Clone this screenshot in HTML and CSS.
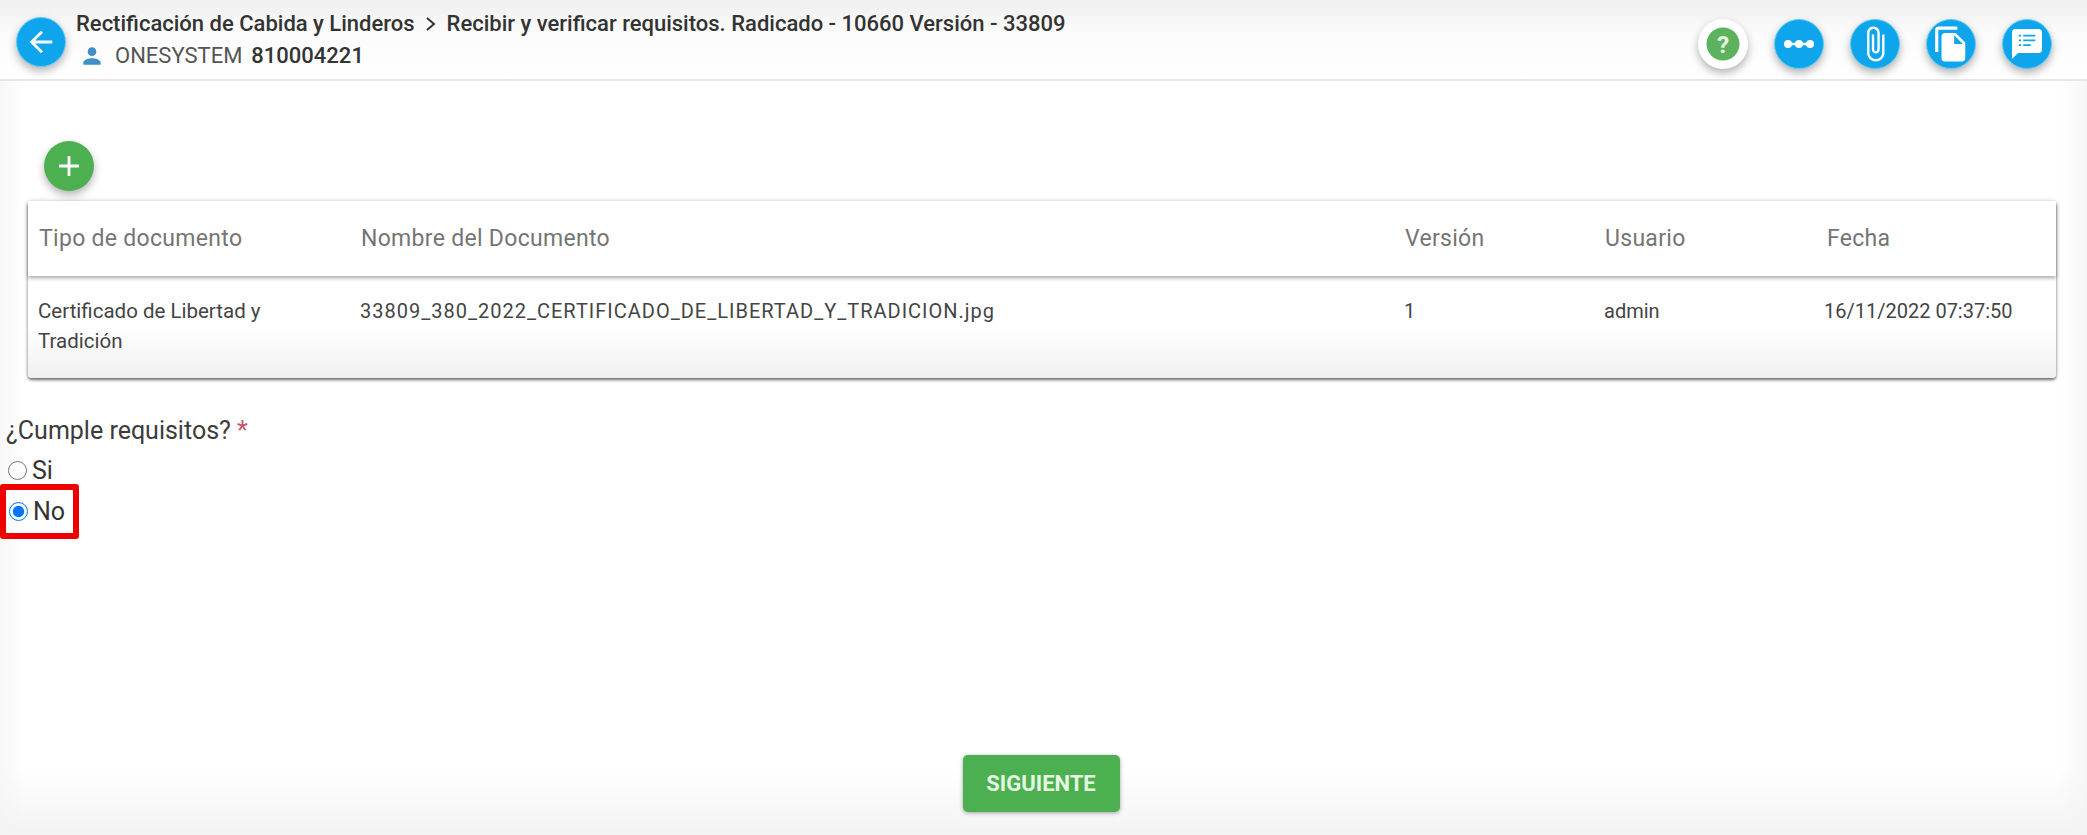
FILE: index.html
```html
<!DOCTYPE html>
<html lang="es">
<head>
    <meta charset="UTF-8">
    <title>Recibir y verificar requisitos</title>
    <link rel="stylesheet" href="styles.css">
</head>
<body>
    <div class="page">
        <header class="top-bar">
            <button class="fab fab-blue back-btn">
                <svg width="34" height="34" viewBox="0 0 24 24"><path fill="#fff" d="M20 11H7.83l5.59-5.59L12 4l-8 8 8 8 1.41-1.41L7.83 13H20v-2z"/></svg>
            </button>
            <div class="top-text">
                <div class="crumb">
                    <span>Rectificación de Cabida y Linderos</span>
                    <svg class="crumb-sep" width="14" height="16" viewBox="0 0 14 16"><path fill="none" stroke="#333" stroke-width="2" d="M3 2l7 6-7 6"/></svg>
                    <span>Recibir y verificar requisitos. Radicado - 10660 Versión - 33809</span>
                </div>
                <div class="user-line">
                    <svg class="user-icon" width="26" height="26" viewBox="0 0 24 24"><path fill="#3f8fc9" d="M12 12c2.21 0 4-1.79 4-4s-1.79-4-4-4-4 1.79-4 4 1.79 4 4 4zm0 2c-2.67 0-8 1.34-8 4v2h16v-2c0-2.66-5.33-4-8-4z"/></svg>
                    <span class="user-name">ONESYSTEM</span>
                    <strong>810004221</strong>
                </div>
            </div>
            <div class="top-actions">
                <button class="fab fab-white">
                    <svg width="34" height="34" viewBox="0 0 36 36"><circle cx="18" cy="18" r="17.5" fill="#5cb25d"/><text x="18" y="27" class="help-mark">?</text></svg>
                </button>
                <button class="fab fab-blue">
                    <svg width="34" height="12" viewBox="0 0 34 12"><path stroke="#fff" stroke-width="2.5" d="M4 6h26"/><circle cx="6" cy="6" r="4" fill="#fff"/><circle cx="17" cy="6" r="4" fill="#fff"/><circle cx="28" cy="6" r="4" fill="#fff"/></svg>
                </button>
                <button class="fab fab-blue">
                    <svg width="38" height="38" viewBox="0 0 24 24"><path fill="#fff" d="M16.5 6v11.5c0 2.21-1.79 4-4 4s-4-1.79-4-4V5c0-1.38 1.12-2.5 2.5-2.5s2.5 1.12 2.5 2.5v10.5c0 .55-.45 1-1 1s-1-.45-1-1V6H10v9.5c0 1.38 1.12 2.5 2.5 2.5s2.5-1.12 2.5-2.5V5c0-2.21-1.79-4-4-4S7 2.79 7 5v12.5c0 3.04 2.46 5.5 5.5 5.5s5.5-2.46 5.5-5.5V6h-1.5z"/></svg>
                </button>
                <button class="fab fab-blue">
                    <svg width="38" height="38" viewBox="0 0 24 24"><path fill="#fff" d="M16 1H4c-1.1 0-2 .9-2 2v14h2V3h12V1zm-1 4l6 6v10c0 1.1-.9 2-2 2H7.99C6.89 23 6 22.1 6 21l.01-14c0-1.1.89-2 1.99-2h7zm-1 7h5.5L14 6.5V12z"/></svg>
                </button>
                <button class="fab fab-blue">
                    <svg width="36" height="36" viewBox="0 0 24 24"><path fill="#fff" fill-rule="evenodd" d="M20 2H4c-1.1 0-2 .9-2 2v18l4-4h14c1.1 0 2-.9 2-2V4c0-1.1-.9-2-2-2zM8 7H6.5V5.8H8V7zm0 3.2H6.5V9H8v1.2zm0 3.2H6.5v-1.2H8v1.2zM17.5 7H9.5V5.8h8V7zm0 3.2h-8V9h8v1.2zm-3 3.2h-5v-1.2h5v1.2z"/></svg>
                </button>
            </div>
        </header>

        <main class="content">
            <button class="fab fab-green add-btn">
                <svg width="34" height="34" viewBox="0 0 24 24"><path fill="#fff" d="M19 13h-6v6h-2v-6H5v-2h6V5h2v6h6v2z"/></svg>
            </button>

            <div class="doc-card">
                <table class="doc-table">
                    <thead>
                        <tr>
                            <th class="col-type">Tipo de documento</th>
                            <th class="col-name">Nombre del Documento</th>
                            <th class="col-version">Versión</th>
                            <th class="col-user">Usuario</th>
                            <th>Fecha</th>
                        </tr>
                    </thead>
                    <tbody>
                        <tr>
                            <td class="type-cell">Certificado de Libertad y Tradición</td>
                            <td class="file-cell">33809_380_2022_CERTIFICADO_DE_LIBERTAD_Y_TRADICION.jpg</td>
                            <td>1</td>
                            <td>admin</td>
                            <td class="date-cell">16/11/2022 07:37:50</td>
                        </tr>
                    </tbody>
                </table>
            </div>

            <form class="question">
                <div class="question-label">¿Cumple requisitos? <span class="required">*</span></div>
                <label class="radio-row"><input type="radio" name="cumple"> Si</label>
                <label class="radio-row radio-marked"><input type="radio" name="cumple" checked> No</label>
            </form>
        </main>

        <div class="actions">
            <button class="next-btn">SIGUIENTE</button>
        </div>
    </div>
</body>
</html>
```

FILE: styles.css
```css
* {
    box-sizing: border-box;
}
html, body {
    height: 100%;
}
body {
    margin: 0;
    font-family: Roboto, "Liberation Sans", sans-serif;
    color: #333;
    background-color: #fff;
    overflow: hidden;
}
.page {
    height: 835px;
    display: flex;
    flex-direction: column;
    background:
        linear-gradient(to bottom, rgba(240, 240, 240, 0) 92%, #f3f3f3 100%),
        linear-gradient(to right, #f7f7f7 0, #fff 24px, #fff 2060px, #f6f6f6 100%);
}
button {
    font-family: inherit;
    border: none;
    padding: 0;
    cursor: pointer;
}

/* barra de arriba */
.top-bar {
    height: 81px;
    flex: none;
    display: flex;
    align-items: center;
    padding: 8px 35px 0 16px;
    border-bottom: 2px solid #e6e6e6;
    background: linear-gradient(to bottom, #efefef 0, #fbfbfb 40%, #fff 100%);
}
.back-btn {
    margin-top: -4px;
}
.fab {
    width: 50px;
    height: 50px;
    border-radius: 50%;
    display: flex;
    align-items: center;
    justify-content: center;
    flex: none;
    box-shadow: 0 4px 8px rgba(0, 0, 0, 0.3);
}
.fab-blue {
    background-color: #0ea5ec;
    border: 1px solid #62ccf8;
}
.fab-white {
    background-color: #fff;
}
.fab-green {
    background-color: #4caf50;
}
.help-mark {
    font-size: 26px;
    font-weight: 700;
    text-anchor: middle;
    fill: #e4f3e4;
}
.top-text {
    margin-left: 10px;
    margin-top: -11px;
}
.crumb {
    display: flex;
    align-items: center;
    font-size: 22px;
    font-weight: 500;
    line-height: 34px;
    color: #333;
}
.crumb-sep {
    margin: 0 9px 0 9px;
}
.user-line {
    display: flex;
    align-items: center;
    font-size: 22px;
    line-height: 28px;
    margin-top: 1px;
}
.user-icon {
    margin-left: 3px;
}
.user-name {
    margin: 0 9px 0 10px;
    color: #555;
}
.user-line strong {
    font-weight: 500;
    color: #333;
}
.top-actions {
    margin-left: auto;
    display: flex;
    gap: 26px;
}

/* contenido */
.content {
    flex: 1;
}
.add-btn {
    margin: 60px 0 0 44px;
}
.doc-card {
    margin: 10px 31px 0 28px;
    height: 177px;
    border-radius: 4px;
    background: linear-gradient(to bottom, #fff 0, #fff 70%, #f0f0f0 100%);
    box-shadow: 0 2px 3px rgba(0, 0, 0, 0.55), 0 0 6px rgba(0, 0, 0, 0.12);
}
.doc-table {
    width: 100%;
    table-layout: fixed;
    border-collapse: collapse;
}
.doc-table thead tr {
    height: 75px;
    box-shadow: 0 2px 4px rgba(0, 0, 0, 0.35);
}
.doc-table th {
    text-align: left;
    font-size: 23px;
    font-weight: 400;
    color: #757575;
    padding: 0 0 0 11px;
    letter-spacing: 0.3px;
    background-color: #fff;
}
.doc-table td {
    font-size: 20px;
    line-height: 30px;
    color: #444;
    vertical-align: top;
    padding: 20px 10px 0 10px;
}
.col-type {
    width: 322px;
}
.col-name {
    width: 1044px;
}
.col-version {
    width: 200px;
}
.col-user {
    width: 222px;
}
.doc-table .type-cell {
    padding-right: 60px;
    font-size: 20.5px;
}
.doc-table .file-cell {
    letter-spacing: 1px;
}
.doc-table .date-cell {
    padding-left: 8px;
}

/* pregunta */
.question {
    margin: 37px 0 0 6px;
    width: 250px;
}
.question-label {
    font-size: 25px;
    line-height: 32px;
    color: #3c3c3c;
    margin-bottom: 7px;
}
.required {
    color: #c4566c;
}
.radio-row {
    display: flex;
    align-items: center;
    gap: 5px;
    font-size: 25px;
    height: 32px;
    color: #333;
    padding-left: 2px;
}
.radio-row input {
    margin: 0;
    width: 19px;
    height: 19px;
}
.radio-marked {
    width: 79px;
    height: 55px;
    margin: -2px 0 0 -6px;
    padding-left: 3px;
    border: 6px solid #ee0000;
    border-radius: 3px;
}

.actions {
    flex: none;
    display: flex;
    justify-content: center;
    padding: 0 5px 23px 0;
}
.next-btn {
    width: 157px;
    height: 57px;
    background-color: #4caf50;
    color: #e3f8e0;
    font-size: 22px;
    font-weight: 700;
    border-radius: 5px;
    box-shadow: 0 1px 4px rgba(0, 0, 0, 0.35);
}
```
